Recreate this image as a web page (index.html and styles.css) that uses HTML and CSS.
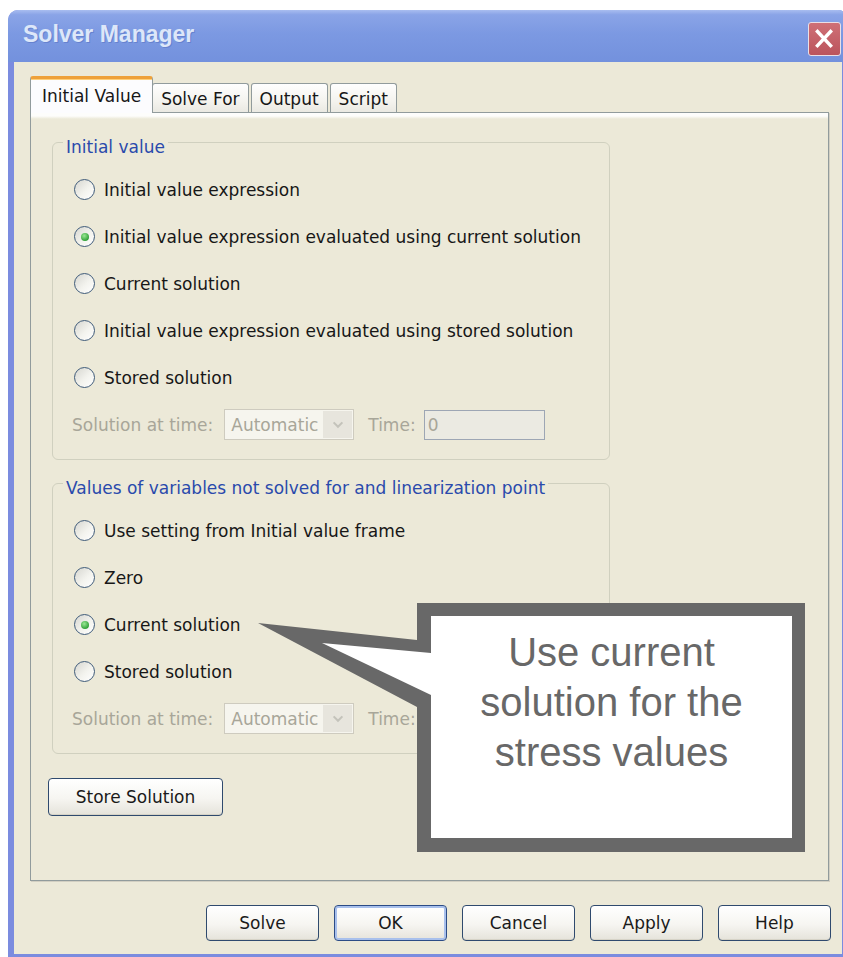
FILE: index.html
```html
<!DOCTYPE html>
<html lang="en">
<head>
<meta charset="utf-8">
<title>Solver Manager</title>
<link rel="stylesheet" href="styles.css">
</head>
<body>
<div class="window">
  <div class="titlebar">
    <span class="title">Solver Manager</span>
    <span class="close" aria-label="Close">
      <svg viewBox="0 0 33 34" width="31" height="32"><path d="M9 9 L23 24 M23 9 L9 24" stroke="#fff" stroke-width="3.6" stroke-linecap="square"/></svg>
    </span>
  </div>
  <div class="client">
    <div class="tabs">
      <div class="tab active">Initial Value</div>
      <div class="tab">Solve For</div>
      <div class="tab">Output</div>
      <div class="tab">Script</div>
    </div>
    <div class="panel">
      <div class="group">
        <div class="caption">Initial value</div>
        <div class="row"><span class="radio"></span>Initial value expression</div>
        <div class="row"><span class="radio on"></span>Initial value expression evaluated using current solution</div>
        <div class="row"><span class="radio"></span>Current solution</div>
        <div class="row"><span class="radio"></span>Initial value expression evaluated using stored solution</div>
        <div class="row"><span class="radio"></span>Stored solution</div>
        <div class="row disabled">
          <span>Solution at time:</span>
          <span class="combo"><span class="combo-text">Automatic</span><span class="combo-btn"><svg viewBox="0 0 16 16" width="14" height="14"><path d="M3 5 L8 10 L13 5" fill="none" stroke="#c4c3bb" stroke-width="2.4"/></svg></span></span>
          <span class="time-label">Time:</span>
          <span class="field">0</span>
        </div>
      </div>
      <div class="group">
        <div class="caption">Values of variables not solved for and linearization point</div>
        <div class="row"><span class="radio"></span>Use setting from Initial value frame</div>
        <div class="row"><span class="radio"></span>Zero</div>
        <div class="row"><span class="radio on"></span>Current solution</div>
        <div class="row"><span class="radio"></span>Stored solution</div>
        <div class="row disabled">
          <span>Solution at time:</span>
          <span class="combo"><span class="combo-text">Automatic</span><span class="combo-btn"><svg viewBox="0 0 16 16" width="14" height="14"><path d="M3 5 L8 10 L13 5" fill="none" stroke="#c4c3bb" stroke-width="2.4"/></svg></span></span>
          <span class="time-label">Time:</span>
          <span class="field">0</span>
        </div>
      </div>
      <button class="btn store" type="button">Store Solution</button>
    </div>
    <div class="actions">
      <button class="btn" type="button">Solve</button>
      <button class="btn default" type="button">OK</button>
      <button class="btn" type="button">Cancel</button>
      <button class="btn" type="button">Apply</button>
      <button class="btn" type="button">Help</button>
    </div>
  </div>
</div>

<div class="callout">
  <svg width="547" height="249" viewBox="0 0 547 249">
    <polygon class="callout-frame" points="159,0 547,0 547,249 159,249 159,104 0,20 159,37"/>
    <polygon class="callout-fill" points="173,13 534,13 534,235 173,235 173,92 64,40 173,50"/>
  </svg>
  <p class="callout-text">Use current<br>solution for the<br>stress values</p>
</div>
</body>
</html>
```

FILE: styles.css
```css
* {
  box-sizing: border-box;
}

html,
body {
  margin: 0;
  padding: 0;
}

body {
  position: relative;
  width: 843px;
  height: 957px;
  overflow: hidden;
  background: #ffffff;
  font-family: "DejaVu Sans", "Noto Sans", sans-serif;
  font-size: 17px;
  color: #171717;
}

/* window frame */
.window {
  margin: 10px 0 0 8px;
  width: 840px;
  border-radius: 10px 10px 0 0;
  background: #7b8cdf;
  overflow: hidden;
}

.titlebar {
  height: 52px;
  display: flex;
  align-items: center;
  justify-content: space-between;
  padding: 0 7px 0 15px;
  background: linear-gradient(#a9bdf0 0, #8aa4e7 9%, #7c99e2 45%, #7391dd 100%);
}

.title {
  font-family: "Liberation Sans", Arial, sans-serif;
  font-weight: bold;
  font-size: 23px;
  color: #dde7f9;
  text-shadow: 1px 1px 0 #6682cf;
  margin-top: -3px;
}

.close {
  width: 33px;
  height: 34px;
  margin-top: 5px;
  border: 1px solid #eadfe6;
  border-radius: 3px;
  background: linear-gradient(#cf7076, #bb545d);
  display: flex;
  align-items: center;
  justify-content: center;
}

.client {
  margin: 0 6px 3px;
  height: 892px;
  background: #ece9d8;
  padding: 14px 0 0 16px;
}

/* tab strip */
.tabs {
  display: flex;
  align-items: flex-end;
  height: 37px;
  margin-bottom: -1px;
}

.tab {
  height: 30px;
  padding: 0 8px;
  border: 1px solid #919b9c;
  border-bottom: 0;
  border-radius: 3px 3px 0 0;
  background: linear-gradient(#fefefe, #f4f3ee 60%, #e9e8e1);
  display: flex;
  align-items: center;
  margin-right: 2px;
  white-space: nowrap;
}

.tab.active {
  position: relative;
  z-index: 2;
  height: 37px;
  padding: 0 11px;
  margin-right: -1px;
  background: #fcfcfe;
  border-top: 3px solid #eea13a;
  box-shadow: inset 0 1px 0 #ffd07a;
}

.panel {
  position: relative;
  width: 799px;
  height: 769px;
  border: 1px solid #919b9c;
  background: linear-gradient(#fdfdfb 0, #fdfdfb 3px, #ece9d8 6px);
  padding: 29px 0 0 21px;
  box-shadow: 1px 1px 0 #d2cfc2;
}

/* group boxes */
.group {
  width: 558px;
  border: 1px solid #d0d0bf;
  border-radius: 6px;
  padding: 0 0 11px 21px;
}

.group + .group {
  margin-top: 23px;
}

.caption {
  width: fit-content;
  height: 20px;
  line-height: 20px;
  margin: -6px 0 9px -11px;
  padding: 0 3px;
  background: #ece9d8;
  color: #2a4aac;
  white-space: nowrap;
}

.row {
  display: flex;
  align-items: center;
  height: 47px;
  white-space: nowrap;
}

.radio {
  flex: none;
  width: 21px;
  height: 21px;
  margin-right: 9px;
  border-radius: 50%;
  border: 1px solid #3f5b7a;
  background: linear-gradient(135deg, #d6d6d0, #f3f3ee 55%, #ffffff);
  display: flex;
  align-items: center;
  justify-content: center;
}

.radio.on::after {
  content: "";
  width: 8px;
  height: 8px;
  border-radius: 50%;
  background: radial-gradient(circle at 40% 35%, #9ae894, #33a23a 70%);
}

.row.disabled {
  margin-left: -2px;
  color: #a8a699;
}

.combo {
  display: flex;
  align-items: center;
  width: 130px;
  height: 31px;
  margin-left: 11px;
  border: 1px solid #cecbbf;
  background: #f6f5ee;
}

.combo-text {
  flex: 1;
  padding-left: 6px;
}

.combo-btn {
  width: 29px;
  height: 27px;
  margin-right: 1px;
  background: #e7e5dd;
  display: flex;
  align-items: center;
  justify-content: center;
}

.time-label {
  margin-left: 14px;
}

.field {
  display: flex;
  align-items: center;
  width: 121px;
  height: 30px;
  margin-left: 8px;
  padding-left: 3px;
  border: 1px solid #9da6b4;
  background: #ebeae2;
}

/* push buttons */
.btn {
  font: inherit;
  color: #1a1a1a;
  height: 37px;
  padding: 0;
  border: 1px solid #2f4a6e;
  border-radius: 4px;
  background: linear-gradient(#ffffff, #f6f5f1 55%, #e5e3da);
  box-shadow: inset 0 -1px 0 #d6d3c7;
}

.btn.store {
  display: block;
  width: 175px;
  height: 38px;
  margin: 24px 0 0 -4px;
}

.actions {
  display: flex;
  justify-content: flex-end;
  gap: 15px;
  margin: 24px 11px 0 0;
}

.actions .btn {
  width: 113px;
  height: 36px;
}

.btn.default {
  border-color: #2c4c86;
  box-shadow: inset 0 0 0 2px #a8c0ec;
}

/* annotation bubble laid over the dialog */
.callout {
  position: absolute;
  left: 258px;
  top: 603px;
  width: 547px;
  height: 249px;
}

.callout svg {
  position: absolute;
  left: 0;
  top: 0;
}

.callout-frame {
  fill: #686868;
}

.callout-fill {
  fill: #ffffff;
}

.callout-text {
  position: absolute;
  left: 173px;
  top: 13px;
  width: 361px;
  margin: 0;
  padding-top: 11px;
  text-align: center;
  font-family: "Liberation Sans", Arial, sans-serif;
  font-size: 40px;
  line-height: 50px;
  color: #686868;
}
```
